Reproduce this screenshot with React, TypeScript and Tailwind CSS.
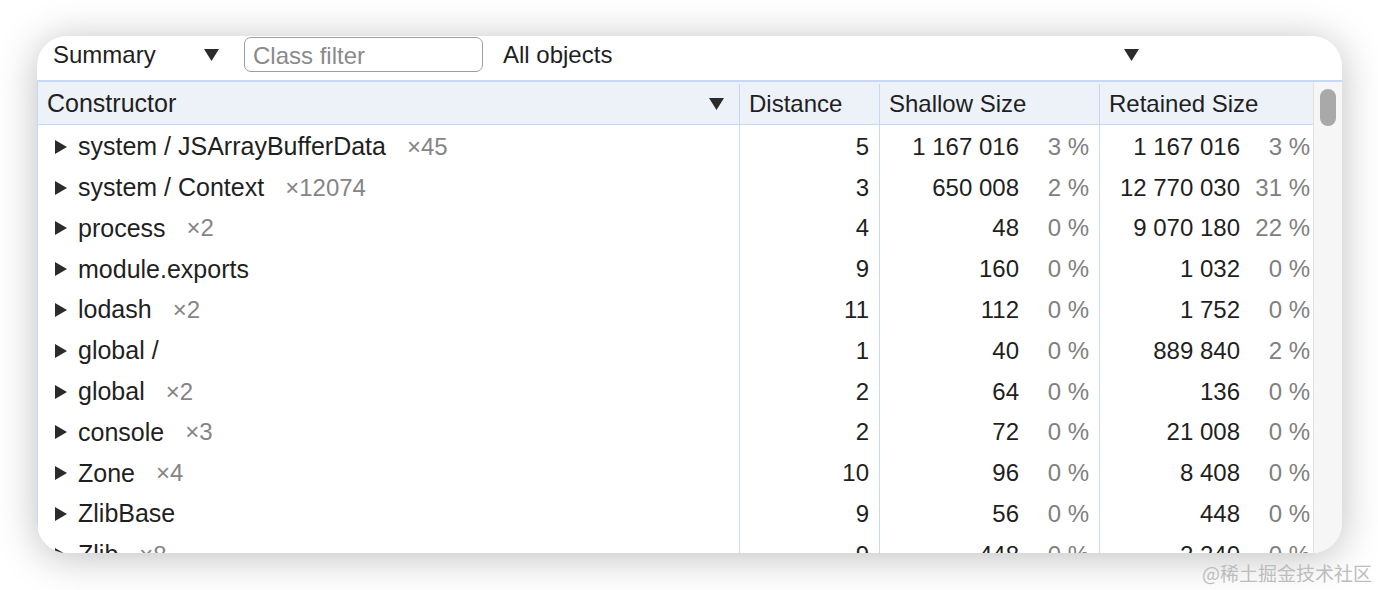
type Row = {
  name: string
  count?: string
  distance: string
  shallow: string
  shallowPct: string
  retained: string
  retainedPct: string
}

const rows: Row[] = [
  { name: 'system / JSArrayBufferData', count: '×45', distance: '5', shallow: '1 167 016', shallowPct: '3 %', retained: '1 167 016', retainedPct: '3 %' },
  { name: 'system / Context', count: '×12074', distance: '3', shallow: '650 008', shallowPct: '2 %', retained: '12 770 030', retainedPct: '31 %' },
  { name: 'process', count: '×2', distance: '4', shallow: '48', shallowPct: '0 %', retained: '9 070 180', retainedPct: '22 %' },
  { name: 'module.exports', distance: '9', shallow: '160', shallowPct: '0 %', retained: '1 032', retainedPct: '0 %' },
  { name: 'lodash', count: '×2', distance: '11', shallow: '112', shallowPct: '0 %', retained: '1 752', retainedPct: '0 %' },
  { name: 'global /', distance: '1', shallow: '40', shallowPct: '0 %', retained: '889 840', retainedPct: '2 %' },
  { name: 'global', count: '×2', distance: '2', shallow: '64', shallowPct: '0 %', retained: '136', retainedPct: '0 %' },
  { name: 'console', count: '×3', distance: '2', shallow: '72', shallowPct: '0 %', retained: '21 008', retainedPct: '0 %' },
  { name: 'Zone', count: '×4', distance: '10', shallow: '96', shallowPct: '0 %', retained: '8 408', retainedPct: '0 %' },
  { name: 'ZlibBase', distance: '9', shallow: '56', shallowPct: '0 %', retained: '448', retainedPct: '0 %' },
  { name: 'Zlib', count: '×8', distance: '9', shallow: '448', shallowPct: '0 %', retained: '2 240', retainedPct: '0 %' },
]

function DownArrow() {
  return (
    <svg width="15" height="12" viewBox="0 0 15 12">
      <polygon points="0,0 15,0 7.5,12" fill="#2b2b2b" />
    </svg>
  )
}

function RightArrow() {
  return (
    <svg width="12" height="14" viewBox="0 0 12 14">
      <polygon points="0,0 12,7 0,14" fill="#2b2b2b" />
    </svg>
  )
}

const cols = 'grid grid-cols-[702px_140px_220px_214px]'

export default function App() {
  return (
    <div
      className="h-[590px] w-[1378px] bg-white overflow-hidden text-[#1f1f1f]"
      style={{ fontFamily: '"Liberation Sans", Arial, sans-serif' }}
    >
      <div className="ml-[37px] mt-[36px] w-[1305px] h-[517px] rounded-[30px] overflow-hidden bg-white shadow-[0_4px_40px_rgba(0,0,0,0.26)] flex flex-col">
        {/* toolbar */}
        <div className="h-[46px] shrink-0 flex items-start border-b-2 border-[#c8d8f4] text-[24px]">
          <div className="h-[38px] flex items-center pl-[16px] w-[206px] justify-between pr-[24px]">
            <span className="leading-none">Summary</span>
            <DownArrow />
          </div>
          <div className="ml-[1px] mt-[1px] h-[35px] w-[239px] rounded-[7px] border border-[#9e9e9e] flex items-center pl-[8px] pt-[2px]">
            <span className="text-[#8a8a8a] leading-none">Class filter</span>
          </div>
          <div className="h-[38px] flex items-center pl-[20px] w-[656px] justify-between">
            <span className="leading-none">All objects</span>
            <DownArrow />
          </div>
        </div>

        <div className="flex flex-1 min-h-0">
          <div className="flex-1 min-w-0 overflow-hidden border-l border-[#c8d8f4]">
            {/* header */}
            <div className={`${cols} h-[43px] bg-[#edf1f8] border-b border-[#c8d8f4] text-[24px] pt-[2px]`}>
              <div className="flex items-center justify-between pl-[9px] pr-[15px] border-r border-[#c8d8f4]">
                <span className="text-[25px]">Constructor</span>
                <DownArrow />
              </div>
              <div className="flex items-center pl-[9px] border-r border-[#c8d8f4]">Distance</div>
              <div className="flex items-center pl-[9px] border-r border-[#c8d8f4]">Shallow Size</div>
              <div className="flex items-center pl-[9px]">Retained Size</div>
            </div>
            {/* rows */}
            {rows.map((r) => (
              <div key={r.name + (r.count ?? '')} className={`${cols} h-[40.8px] text-[24px]`}>
                <div className="flex items-center pl-[17px] pt-[3px] border-r border-[#c8d8f4] whitespace-nowrap">
                  <RightArrow />
                  <span className="ml-[11px] text-[25px]">{r.name}</span>
                  <span className="ml-[21px] text-[#858585] text-[24px]">{r.count}</span>
                </div>
                <div className="flex items-center justify-end pr-[10px] pt-[3px] border-r border-[#c8d8f4]">{r.distance}</div>
                <div className="flex items-center justify-end pr-[10px] pt-[3px] border-r border-[#c8d8f4]">
                  <span>{r.shallow}</span>
                  <span className="w-[70px] text-right text-[#808080]">{r.shallowPct}</span>
                </div>
                <div className="flex items-center justify-end pr-[4px] pt-[3px]">
                  <span>{r.retained}</span>
                  <span className="w-[70px] text-right text-[#808080]">{r.retainedPct}</span>
                </div>
              </div>
            ))}
          </div>
          {/* scrollbar */}
          <div className="w-[29px] shrink-0 bg-[#f6f6f6] border-l border-[#e2e2e2] pl-[6px] pt-[7px]">
            <div className="w-[16px] h-[37px] rounded-full bg-[#a9a9a9]" />
          </div>
        </div>
      </div>
      <div className="flex justify-end pr-[6px] mt-[10px]">
        <span
          className="text-[19px] leading-none text-[#bdbdbd]"
          style={{ fontFamily: '"Noto Sans CJK SC", sans-serif' }}
        >
          @稀土掘金技术社区
        </span>
      </div>
    </div>
  )
}
